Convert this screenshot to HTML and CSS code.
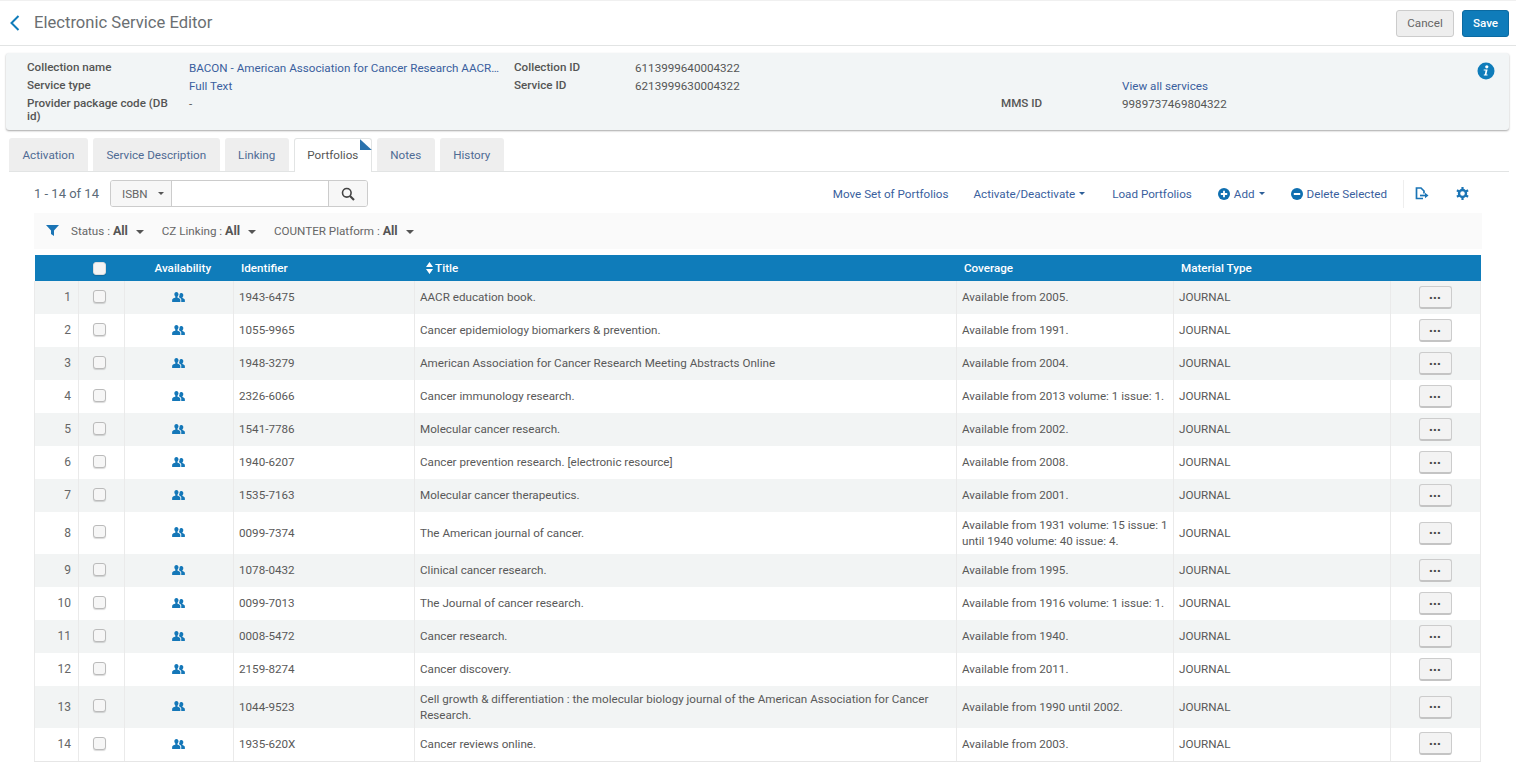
FILE: index.html
```html
<!DOCTYPE html>
<html lang="en">
<head>
<meta charset="utf-8">
<title>Electronic Service Editor</title>
<link rel="stylesheet" href="styles.css">
</head>
<body>
<svg class="defs" width="0" height="0" aria-hidden="true">
  <symbol id="people" viewBox="0 0 14 11">
    <path d="M4.700 0C3.200 0 2.400 1.200 2.400 2.600c0 1.100.5 2 1.200 2.600v.9C2.200 6.600.3 7.300 0 8.400V11h9V8.400C8.700 7.300 7 6.600 5.800 6.100v-.9c.7-.6 1.200-1.500 1.200-2.600C7 1.200 6.200 0 4.700 0z"/>
    <path d="M10.300 1C9.400 1 8.600 1.500 8.200 2.300c.1.800 0 2.100-.8 3.200l.1.300c.8.400 2 1.100 2.500 2.300V11H14V8.600c-.3-.9-1.700-1.600-2.700-2v-.9c.6-.5 1-1.300 1-2.200C12.300 2 11.500 1 10.300 1z"/>
  </symbol>
</svg>
<header class="topbar">
  <div class="topbar-left">
    <svg class="back" width="12" height="16" viewBox="0 0 12 16"><path d="M9.500 1 2.500 8l7 7" fill="none" stroke="#0f7cba" stroke-width="2"/></svg>
    <h1>Electronic Service Editor</h1>
  </div>
  <div class="topbar-actions">
    <button class="btn btn-cancel">Cancel</button>
    <button class="btn btn-save">Save</button>
  </div>
</header>

<section class="summary">
  <div class="summary-grid">
    <div class="lbl">Collection name</div>
    <div class="val link trunc">BACON - American Association for Cancer Research AACR Journals</div>
    <div class="lbl">Collection ID</div>
    <div class="val">6113999640004322</div>
    <div class="lbl"></div>
    <div class="val"></div>

    <div class="lbl">Service type</div>
    <div class="val link">Full Text</div>
    <div class="lbl">Service ID</div>
    <div class="val">6213999630004322</div>
    <div class="lbl"></div>
    <div class="val link">View all services</div>

    <div class="lbl">Provider package code (DB id)</div>
    <div class="val">-</div>
    <div class="lbl"></div>
    <div class="val"></div>
    <div class="lbl">MMS ID</div>
    <div class="val">9989737469804322</div>
  </div>
  <svg class="info" width="18" height="18" viewBox="0 0 18 18"><circle cx="9" cy="9" r="8.500" fill="#0f7cba"/><circle cx="9.800" cy="4.800" r="1.600" fill="#fff"/><path d="M6.700 7.500h3.900l-1.200 5h1.100v1.100H6.800v-1.100h.9l.9-3.900H6.700z" fill="#fff"/></svg>
</section>

<nav class="tabs">
  <a class="tab">Activation</a>
  <a class="tab">Service Description</a>
  <a class="tab">Linking</a>
  <a class="tab tab-active">Portfolios</a>
  <a class="tab">Notes</a>
  <a class="tab">History</a>
</nav>

<main class="content">
  <div class="toolbar">
    <div class="toolbar-left">
      <span class="count">1 - 14 of 14</span>
      <div class="search">
        <span class="search-type">ISBN <i class="caret caret-isbn"></i></span>
        <span class="search-input"></span>
        <span class="search-btn">
          <svg width="14" height="14" viewBox="0 0 14 14"><circle cx="5.800" cy="5.800" r="4.300" fill="none" stroke="#444" stroke-width="1.600"/><path d="M9 9l4 4" stroke="#444" stroke-width="2.200"/></svg>
        </span>
      </div>
    </div>
    <div class="toolbar-right">
      <a class="action a-move">Move Set of Portfolios</a>
      <a class="action a-activate">Activate/Deactivate <i class="caret caret-sm"></i></a>
      <a class="action a-load">Load Portfolios</a>
      <a class="action a-add">
        <svg width="12" height="12" viewBox="0 0 12 12"><circle cx="6" cy="6" r="6" fill="#0f6fb0"/><path d="M6 2.800v6.400M2.800 6h6.400" stroke="#fff" stroke-width="1.800"/></svg>
        Add <i class="caret caret-sm"></i></a>
      <a class="action a-del">
        <svg width="12" height="12" viewBox="0 0 12 12"><circle cx="6" cy="6" r="6" fill="#0f6fb0"/><path d="M2.800 6h6.400" stroke="#fff" stroke-width="2"/></svg>
        Delete Selected</a>
      <span class="tool-sep"></span>
      <svg class="tool-icon t-export" width="14" height="13" viewBox="0 0 14 13"><path d="M8 11.500H1.500V1h4.500l3 3v2.500" fill="none" stroke="#1a74b5" stroke-width="1.700"/><path d="M5 8.500h6" stroke="#1a74b5" stroke-width="1.700"/><path d="M10 5.800 13.500 8.500 10 11.200z" fill="#1a74b5"/></svg>
      <svg class="tool-icon t-gear" width="13" height="13" viewBox="0 0 13 13"><circle cx="6.500" cy="6.500" r="3.500" fill="none" stroke="#1a74b5" stroke-width="2.400"/><path d="M6.500 0v2.500M6.500 10.500V13M.9 3.200l2.200 1.300M9.900 8.500l2.200 1.300M.9 9.800l2.200-1.300M9.900 4.500l2.200-1.300" stroke="#1a74b5" stroke-width="2.200"/></svg>
    </div>
  </div>

  <div class="filters">
    <svg class="funnel" width="13" height="11" viewBox="0 0 13 11"><path d="M0 0h13L8 5.500V11L5 9V5.500z" fill="#1a74b5"/></svg>
    <span class="filter">Status : <b>All</b> <i class="caret"></i></span>
    <span class="filter">CZ Linking : <b>All</b> <i class="caret"></i></span>
    <span class="filter">COUNTER Platform : <b>All</b> <i class="caret"></i></span>
  </div>

  <table class="grid">
    <colgroup>
      <col class="c-num"><col class="c-chk"><col class="c-av"><col class="c-id"><col class="c-title"><col class="c-cov"><col class="c-mat"><col class="c-act">
    </colgroup>
    <thead>
      <tr>
        <th></th>
        <th class="center cell-chk"><span class="check check-head"></span></th>
        <th class="center h-av">Availability</th>
        <th>Identifier</th>
        <th class="h-title"><svg class="sort" width="7" height="12" viewBox="0 0 7 12"><path d="M3.500 0 7 5H0zM3.500 12 0 7h7z" fill="#fff"/></svg> Title</th>
        <th>Coverage</th>
        <th>Material Type</th>
        <th></th>
      </tr>
    </thead>
    <tbody>
      <tr><td class="num">1</td><td class="center cell-chk"><span class="check"></span></td><td class="center cell-av"><svg class="ppl"><use href="#people"/></svg></td><td>1943-6475</td><td>AACR education book.</td><td>Available from 2005.</td><td>JOURNAL</td><td class="center"><button class="more">•••</button></td></tr>
      <tr><td class="num">2</td><td class="center cell-chk"><span class="check"></span></td><td class="center cell-av"><svg class="ppl"><use href="#people"/></svg></td><td>1055-9965</td><td>Cancer epidemiology biomarkers &amp; prevention.</td><td>Available from 1991.</td><td>JOURNAL</td><td class="center"><button class="more">•••</button></td></tr>
      <tr><td class="num">3</td><td class="center cell-chk"><span class="check"></span></td><td class="center cell-av"><svg class="ppl"><use href="#people"/></svg></td><td>1948-3279</td><td>American Association for Cancer Research Meeting Abstracts Online</td><td>Available from 2004.</td><td>JOURNAL</td><td class="center"><button class="more">•••</button></td></tr>
      <tr><td class="num">4</td><td class="center cell-chk"><span class="check"></span></td><td class="center cell-av"><svg class="ppl"><use href="#people"/></svg></td><td>2326-6066</td><td>Cancer immunology research.</td><td>Available from 2013 volume: 1 issue: 1.</td><td>JOURNAL</td><td class="center"><button class="more">•••</button></td></tr>
      <tr><td class="num">5</td><td class="center cell-chk"><span class="check"></span></td><td class="center cell-av"><svg class="ppl"><use href="#people"/></svg></td><td>1541-7786</td><td>Molecular cancer research.</td><td>Available from 2002.</td><td>JOURNAL</td><td class="center"><button class="more">•••</button></td></tr>
      <tr><td class="num">6</td><td class="center cell-chk"><span class="check"></span></td><td class="center cell-av"><svg class="ppl"><use href="#people"/></svg></td><td>1940-6207</td><td>Cancer prevention research. [electronic resource]</td><td>Available from 2008.</td><td>JOURNAL</td><td class="center"><button class="more">•••</button></td></tr>
      <tr><td class="num">7</td><td class="center cell-chk"><span class="check"></span></td><td class="center cell-av"><svg class="ppl"><use href="#people"/></svg></td><td>1535-7163</td><td>Molecular cancer therapeutics.</td><td>Available from 2001.</td><td>JOURNAL</td><td class="center"><button class="more">•••</button></td></tr>
      <tr><td class="num">8</td><td class="center cell-chk"><span class="check"></span></td><td class="center cell-av"><svg class="ppl"><use href="#people"/></svg></td><td>0099-7374</td><td>The American journal of cancer.</td><td>Available from 1931 volume: 15 issue: 1 until 1940 volume: 40 issue: 4.</td><td>JOURNAL</td><td class="center"><button class="more">•••</button></td></tr>
      <tr><td class="num">9</td><td class="center cell-chk"><span class="check"></span></td><td class="center cell-av"><svg class="ppl"><use href="#people"/></svg></td><td>1078-0432</td><td>Clinical cancer research.</td><td>Available from 1995.</td><td>JOURNAL</td><td class="center"><button class="more">•••</button></td></tr>
      <tr><td class="num">10</td><td class="center cell-chk"><span class="check"></span></td><td class="center cell-av"><svg class="ppl"><use href="#people"/></svg></td><td>0099-7013</td><td>The Journal of cancer research.</td><td>Available from 1916 volume: 1 issue: 1.</td><td>JOURNAL</td><td class="center"><button class="more">•••</button></td></tr>
      <tr><td class="num">11</td><td class="center cell-chk"><span class="check"></span></td><td class="center cell-av"><svg class="ppl"><use href="#people"/></svg></td><td>0008-5472</td><td>Cancer research.</td><td>Available from 1940.</td><td>JOURNAL</td><td class="center"><button class="more">•••</button></td></tr>
      <tr><td class="num">12</td><td class="center cell-chk"><span class="check"></span></td><td class="center cell-av"><svg class="ppl"><use href="#people"/></svg></td><td>2159-8274</td><td>Cancer discovery.</td><td>Available from 2011.</td><td>JOURNAL</td><td class="center"><button class="more">•••</button></td></tr>
      <tr><td class="num">13</td><td class="center cell-chk"><span class="check"></span></td><td class="center cell-av"><svg class="ppl"><use href="#people"/></svg></td><td>1044-9523</td><td>Cell growth &amp; differentiation : the molecular biology journal of the American Association for Cancer Research.</td><td>Available from 1990 until 2002.</td><td>JOURNAL</td><td class="center"><button class="more">•••</button></td></tr>
      <tr><td class="num">14</td><td class="center cell-chk"><span class="check"></span></td><td class="center cell-av"><svg class="ppl"><use href="#people"/></svg></td><td>1935-620X</td><td>Cancer reviews online.</td><td>Available from 2003.</td><td>JOURNAL</td><td class="center"><button class="more">•••</button></td></tr>
    </tbody>
  </table>
</main>
</body>
</html>
```
FILE: styles.css
```css
* { box-sizing: border-box; }
html, body { margin: 0; padding: 0; }
body {
  font-family: Roboto, "Liberation Sans", sans-serif;
  font-size: 11.65px;
  color: #555;
  background: #fff;
  overflow: hidden;
  height: 775px;
}
.defs { position: absolute; }

/* top bar */
.topbar {
  height: 46px;
  border-top: 1px solid #f0f0f0;
  border-bottom: 1px solid #e2e4e4;
  display: flex;
  align-items: center;
  justify-content: space-between;
  padding: 0 7px 0 9px;
}
.topbar-left { display: flex; align-items: center; gap: 13px; }
.back { display: block; }
h1 { margin: 0; font-size: 16.6px; font-weight: 400; color: #6b6f72; line-height: 20px; }
.topbar-actions { display: flex; gap: 8px; }
.btn {
  height: 27px;
  font: 500 11.65px Roboto, sans-serif;
  border-radius: 3px;
  padding: 0;
}
.btn-cancel { width: 58px; background: #eee; border: 1px solid #ccc; color: #666; font-weight: 400; }
.btn-save { width: 47px; background: #0f7cba; border: 1px solid #0b6aa1; color: #fff; }

/* summary */
.summary {
  margin: 7px 7px 0 6px;
  height: 77px;
  background: #f2f5f6;
  border-radius: 3px;
  box-shadow: 0 1px 2px rgba(0,0,0,.35);
  position: relative;
  padding: 6px 0 0 21px;
}
.summary-grid {
  display: grid;
  grid-template-columns: 162px 325px 121px 366px 121px 240px;
  line-height: 13px;
}
.summary-grid > div { min-height: 18px; }
.lbl { font-weight: 500; color: #555; padding: 2px 0 3px; }
.val { color: #555; padding: 3px 0 2px; }
.summary-grid .lbl:nth-child(13) { width: 150px; }
.link { color: #3a5f9e; }
.trunc { white-space: nowrap; overflow: hidden; text-overflow: ellipsis; padding-right: 14px; }
.info { position: absolute; top: 9px; right: 14px; }

/* tabs */
.tabs {
  display: flex;
  gap: 5px;
  margin: 8px 7px 0 9px;
  height: 34px;
  border-bottom: 1px solid #e2e4e4;
}
.tab {
  height: 33px;
  padding: 0 13.5px;
  background: #eee;
  color: #4f6b94;
  line-height: 35px;
  border-radius: 3px 3px 0 0;
}
.tab-active {
  height: 34px;
  background: #fff;
  color: #555;
  border: 1px solid #e2e4e4;
  border-bottom: 0;
  padding: 0 12.5px;
  line-height: 33px;
  position: relative;
}
.tab-active::after {
  content: "";
  position: absolute;
  top: 0;
  right: -1px;
  width: 12px;
  height: 11px;
  background: #2a72ad;
  clip-path: polygon(0 0, 0 100%, 100% 100%);
}

/* content */
.content { padding: 0 35px 0 34px; }
.toolbar {
  display: flex;
  justify-content: space-between;
  align-items: center;
  height: 41px;
  padding-top: 2px;
}
.toolbar-left { display: flex; align-items: center; gap: 11px; }
.count { font-size: 13px; color: #5b6b78; }
.search {
  display: flex;
  width: 258px;
  height: 27px;
  border: 1px solid #ccc;
  border-radius: 3px;
  overflow: hidden;
}
.search-type { width: 61px; background: #f7f7f7; border-right: 1px solid #ccc; display: flex; align-items: center; padding-left: 11px; gap: 10px; color: #666; }
.search-input { flex: 1; background: #fff; }
.search-btn { width: 39px; background: #f7f7f7; border-left: 1px solid #ccc; display: flex; align-items: center; justify-content: center; }
.caret {
  display: inline-block;
  width: 0; height: 0;
  border-left: 4px solid transparent;
  border-right: 4px solid transparent;
  border-top: 4px solid #555;
  vertical-align: middle;
}
.caret-isbn { border-left-width: 3.5px; border-right-width: 3.5px; border-top-width: 3.5px; }
.caret-sm { border-left-width: 3px; border-right-width: 3px; border-top: 3px solid #2d5f98; }
.toolbar-right { display: flex; align-items: center; }
.action { color: #3a5f9e; white-space: nowrap; display: flex; align-items: center; gap: 4px; }
.a-move { margin-right: 25px; }
.a-activate { margin-right: 27px; }
.a-load { margin-right: 26px; }
.a-add { margin-right: 26px; }
.a-del { margin-right: 16px; }
.tool-sep { width: 1px; height: 28px; background: #eee; margin-right: 11px; }
.t-export { margin-right: 27px; display: block; }
.t-gear { margin-right: 12px; display: block; }

.filters {
  display: flex;
  align-items: center;
  height: 36px;
  background: #fafafa;
  padding: 0 0 1px 12px;
  margin-right: -1px;
  gap: 18px;
  color: #666;
}
.funnel { margin-right: -6px; }
.filter { white-space: nowrap; }
.filter b { font-weight: 700; font-size: 12.5px; color: #555; margin: 0 5px 0 0; }

/* table */
.grid {
  table-layout: fixed;
  border-collapse: collapse;
  width: 1446px;
  margin: 6px 0 0 0;
}
.c-num { width: 44px; } .c-chk { width: 46px; } .c-av { width: 109px; } .c-id { width: 181px; }
.c-title { width: 542px; } .c-cov { width: 217px; } .c-mat { width: 217px; } .c-act { width: 90px; }
thead tr { background: #0f7cba; color: #fff; height: 26px; }
th { font-weight: 500; text-align: left; padding: 0 7.5px; }
th.h-av { text-align: left; padding-left: 30px; }
.h-title { padding-left: 11px; }
.sort { vertical-align: -2px; }
tbody tr { height: 33px; }
tbody tr:nth-child(odd) { background: #f2f4f4; }
td {
  padding: 0 5px 2px;
  line-height: 16px;
  border-left: 1px solid #eaeaea;
  border-right: 1px solid #eaeaea;
  color: #595959;
  vertical-align: middle;
}
tbody tr:nth-child(8) td, tbody tr:nth-child(13) td { height: 42px; padding-bottom: 0; }
tbody tr:last-child td { border-bottom: 1px solid #e6e6e6; padding-bottom: 1px; }
.center { text-align: center; padding: 0; }
th.cell-chk { padding: 0 5px 0 0; text-align: center; }
td.cell-chk, tbody tr:nth-child(8) td.cell-chk, tbody tr:nth-child(13) td.cell-chk, tbody tr:last-child td.cell-chk { padding-right: 5px; padding-bottom: 4px; }
td.cell-av, tbody tr:nth-child(8) td.cell-av, tbody tr:nth-child(13) td.cell-av, tbody tr:last-child td.cell-av { padding-right: 2px; padding-bottom: 3px; }
td.num { text-align: right; padding-right: 7px; color: #666; font-size: 12px; }
.check {
  display: inline-block;
  width: 13px; height: 13px;
  vertical-align: middle;
  background: #f6f6f6;
  border: 1px solid #bbb;
  border-radius: 3px;
  box-shadow: 0 1px 1px rgba(0,0,0,.15);
}
.check-head { background: #f4f4f4; border-color: #ddd; }
.ppl { width: 13px; height: 10px; fill: #1477b8; display: inline-block; vertical-align: middle; }
.more {
  width: 33px;
  height: 23px;
  background: #f3f3f3;
  border: 1px solid #ccc;
  border-bottom: 2px solid #c4c4c4;
  border-radius: 3px;
  padding: 0;
  font: 700 8px "Liberation Sans", sans-serif;
  letter-spacing: 1.2px;
  color: #444;
  vertical-align: middle;
}
```
